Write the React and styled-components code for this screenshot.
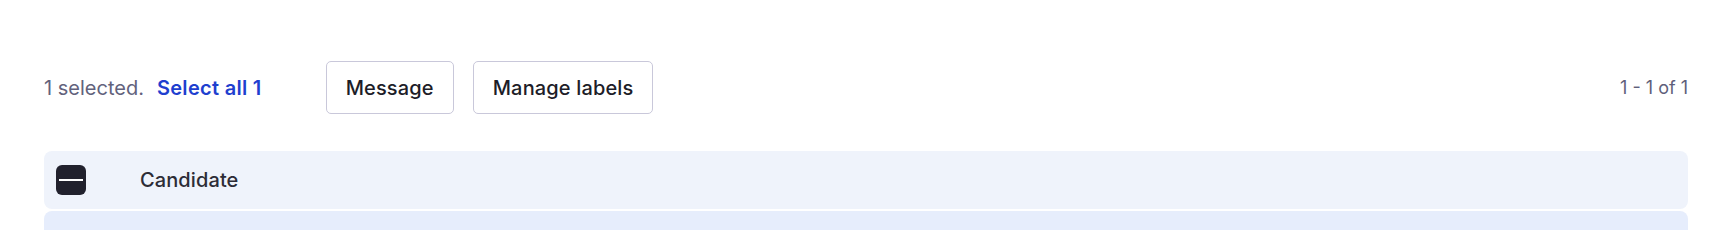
import React from 'react'
import styled, { createGlobalStyle } from 'styled-components'

const GlobalStyle = createGlobalStyle`
  body {
    margin: 0;
    background: #ffffff;
    font-family: Inter, 'Noto Sans', sans-serif;
  }
`

const Page = styled.div`
  padding: 61px 30px 0 44px;
  height: 230px;
  box-sizing: border-box;
  overflow: hidden;
`

const Toolbar = styled.div`
  display: flex;
  align-items: center;
  height: 53px;
`

const SelectionInfo = styled.div`
  display: flex;
  align-items: center;
  font-size: 20px;
  color: #62627c;
`

const SelectAll = styled.a`
  margin-left: 13px;
  color: #1f3fcf;
  font-weight: 600;
  letter-spacing: 0.3px;
  cursor: pointer;
`

const Actions = styled.div`
  display: flex;
  gap: 19px;
  margin-left: 64px;
`

const Button = styled.button`
  height: 53px;
  padding: 0 19px;
  background: #ffffff;
  border: 1px solid #c9c8da;
  border-radius: 5px;
  font-family: inherit;
  font-size: 20px;
  font-weight: 500;
  letter-spacing: 0.15px;
  color: #1d1d28;
  cursor: pointer;
`

const Pagination = styled.div`
  margin-left: auto;
  font-size: 18px;
  color: #5f5f7b;
`

const Table = styled.div`
  margin-top: 37px;
  display: flex;
  flex-direction: column;
  gap: 2px;
`

const HeaderRow = styled.div`
  display: flex;
  align-items: center;
  height: 58px;
  padding-left: 12px;
  background: #eff3fb;
  border-radius: 8px;
`

const Checkbox = styled.div`
  width: 30px;
  height: 30px;
  box-sizing: border-box;
  border-radius: 6px;
  background: #21212d;
  display: flex;
  align-items: center;
  justify-content: center;
  flex-shrink: 0;
  &::after {
    content: '';
    width: 24px;
    height: 2px;
    background: #ffffff;
  }
`

const HeaderCell = styled.div`
  margin-left: 54px;
  font-size: 20px;
  font-weight: 500;
  letter-spacing: 0.1px;
  color: #2c2c36;
`

const BodyRow = styled.div`
  height: 40px;
  background: #e6edfc;
  border-radius: 8px 8px 0 0;
`

export default function App() {
  return (
    <>
      <GlobalStyle />
      <Page>
        <Toolbar>
          <SelectionInfo>
            1 selected.
            <SelectAll>Select all 1</SelectAll>
          </SelectionInfo>
          <Actions>
            <Button>Message</Button>
            <Button>Manage labels</Button>
          </Actions>
          <Pagination>1 - 1 of 1</Pagination>
        </Toolbar>
        <Table>
          <HeaderRow>
            <Checkbox />
            <HeaderCell>Candidate</HeaderCell>
          </HeaderRow>
          <BodyRow />
        </Table>
      </Page>
    </>
  )
}
